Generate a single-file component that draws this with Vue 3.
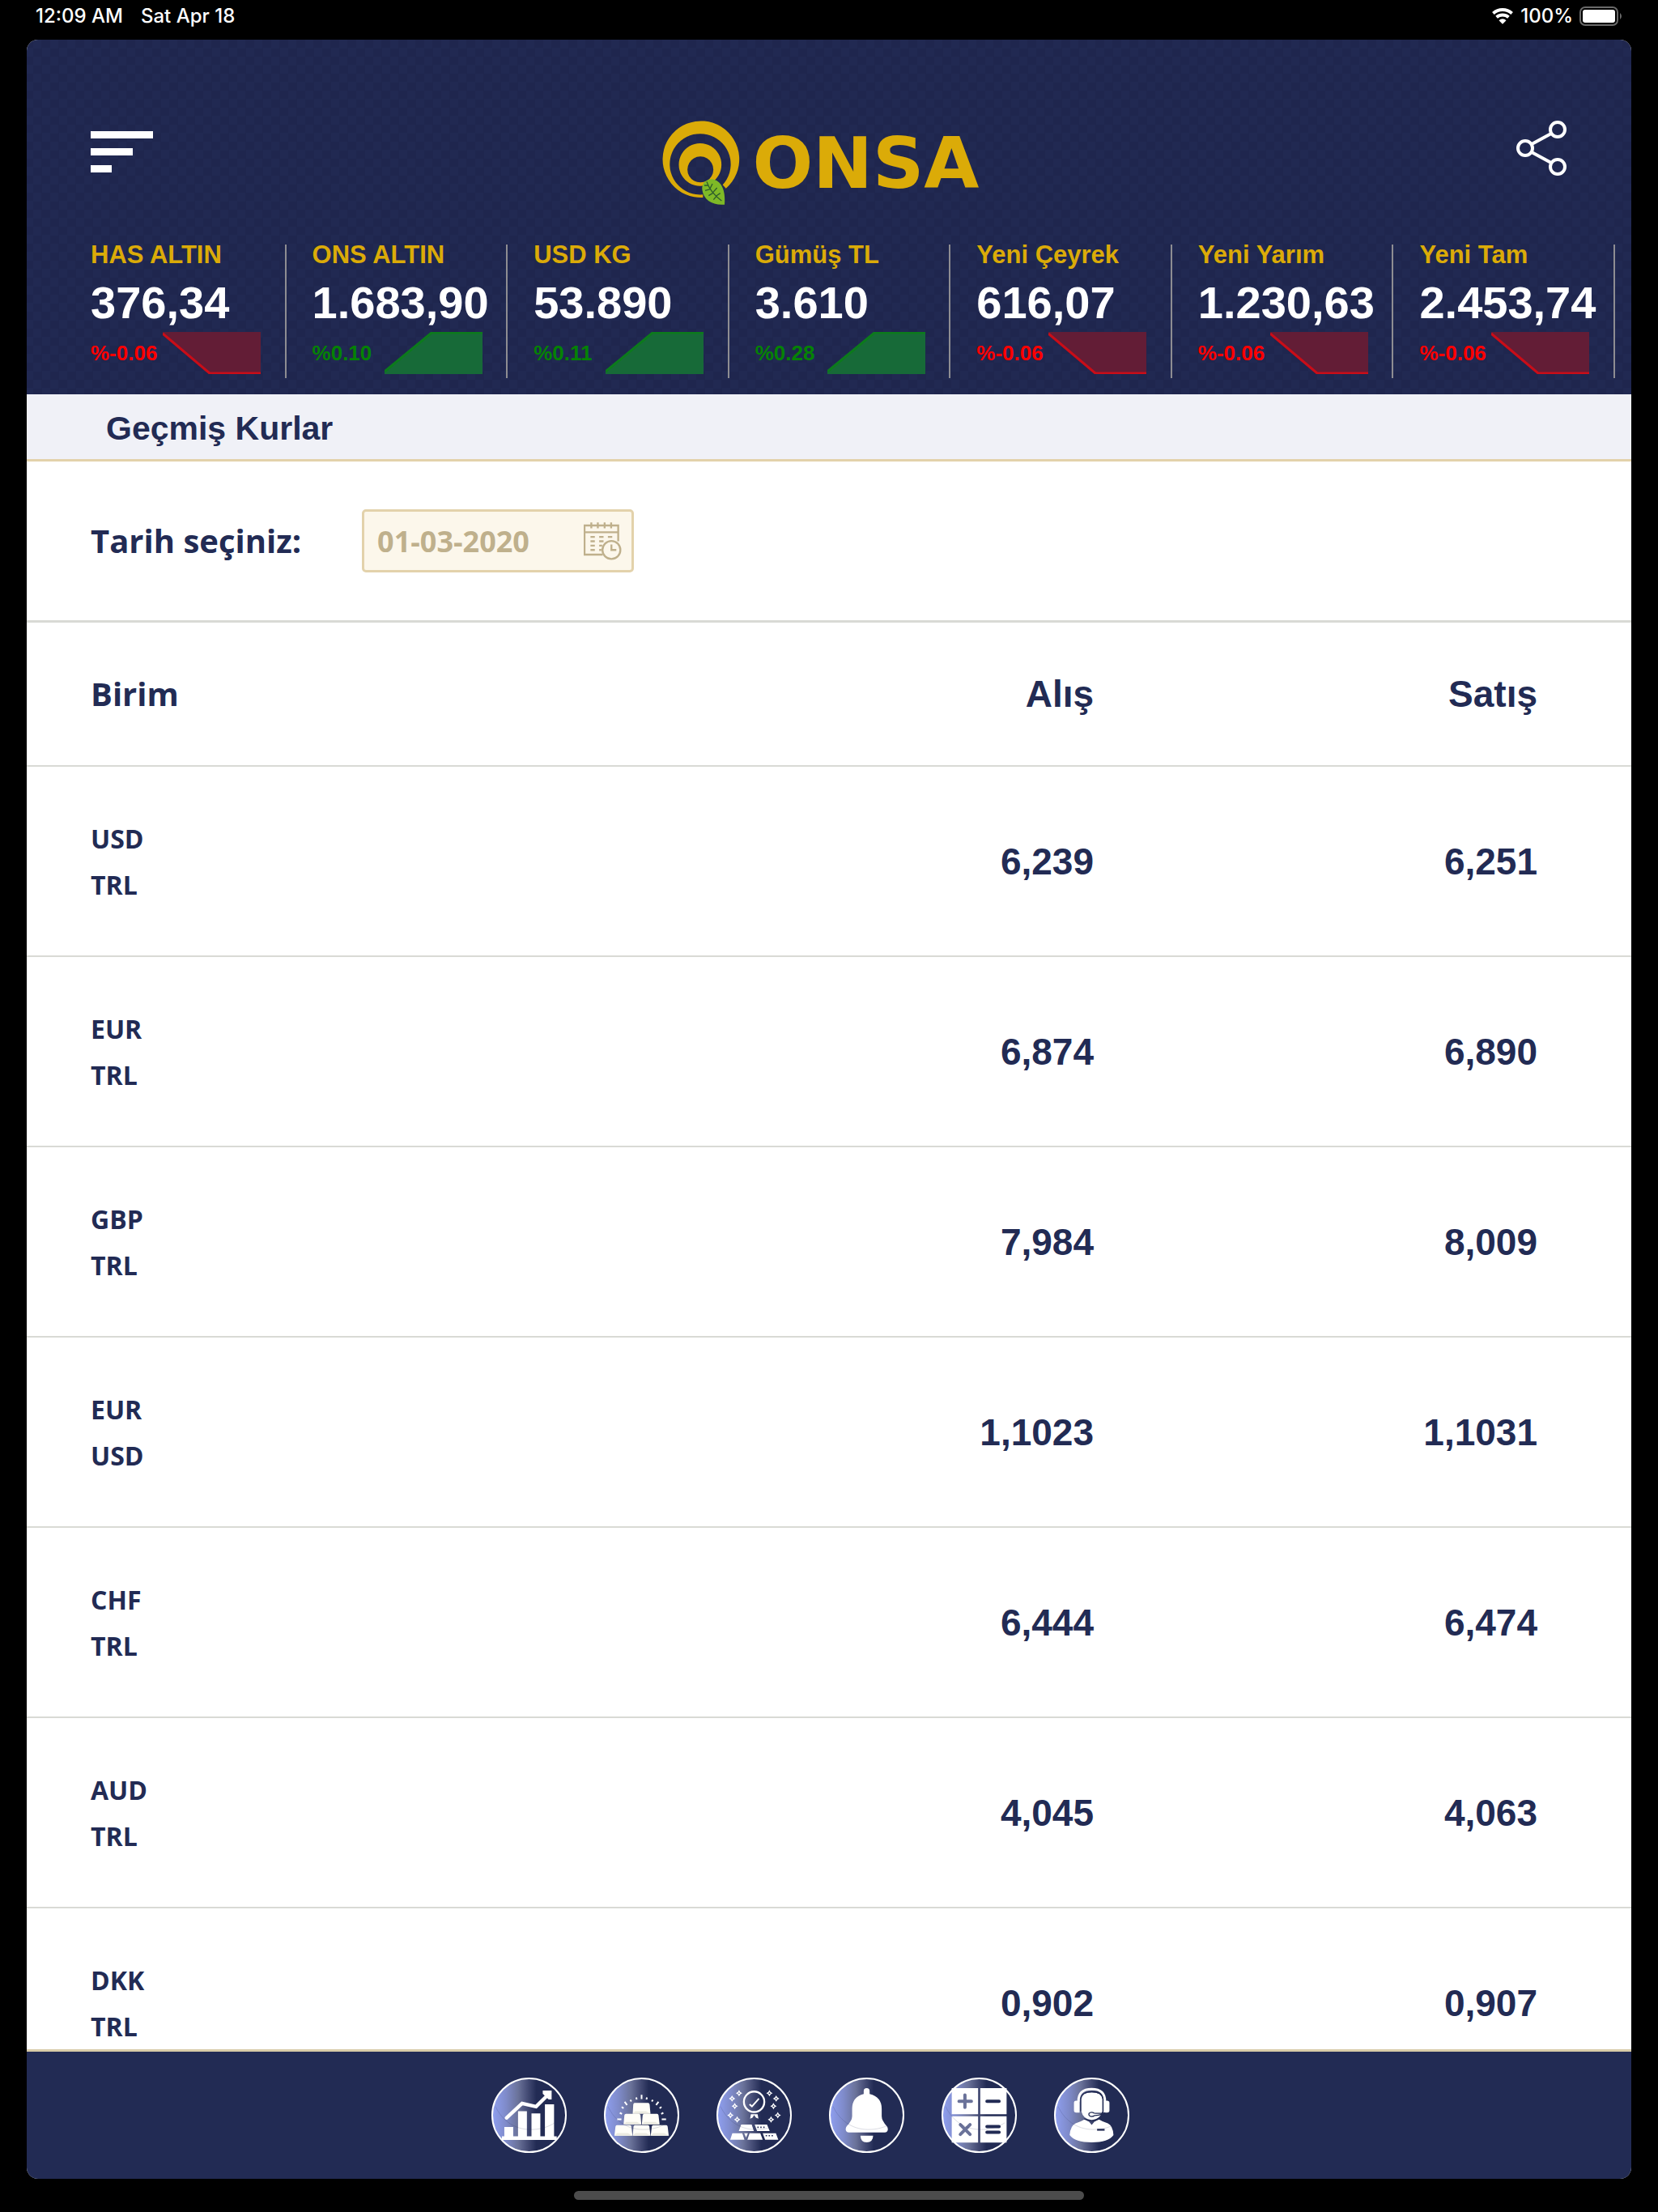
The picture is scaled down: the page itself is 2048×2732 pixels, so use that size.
<template>
    <div class="screen">
        <div class="status-bar">
            <div class="status-group">
                <span>12:09 AM</span>
                <span>Sat Apr 18</span>
            </div>
            <div class="status-group right">
                <svg class="wifi" viewBox="0 0 84 62" aria-hidden="true">
                    <path d="M6 20 A54 54 0 0 1 78 20" />
                    <path d="M19 35 A35 35 0 0 1 65 35" />
                    <path class="dot" d="M42 61 L28 47 A20 20 0 0 1 56 47 Z" />
                </svg>
                <span>100%</span>
                <svg class="battery" viewBox="0 0 53 24" aria-hidden="true">
                    <rect x="1" y="1" width="46" height="22" rx="6" class="case" />
                    <rect x="4" y="4" width="40" height="16" rx="3" fill="#fff" />
                    <path d="M50 8 A5 5 0 0 1 50 16 Z" fill="#6a6a6a" />
                </svg>
            </div>
        </div>

        <div class="app">
            <header class="header">
                <div class="header-top">
                    <button class="menu-button" aria-label="Menü" @click="toggleMenu">
                        <span class="bar long"></span>
                        <span class="bar medium"></span>
                        <span class="bar short"></span>
                    </button>
                    <a href="#" class="logo">
                        <svg class="logo-mark" viewBox="111 93 291 315" aria-hidden="true">
                            <path fill="#dbab08" d="M265 378 A142 142 0 1 1 350 344 L338 331 A113 113 0 1 0 265 367 Z" />
                            <path
                                fill="#dbab08"
                                fill-rule="evenodd"
                                d="M255 177 A79 79 0 1 1 254 177 Z M255 226 A48 48 0 1 0 256 226 Z"
                            />
                            <path
                                fill="#7eb927"
                                d="M262 348 C260 325 275 311 300 310 C333 316 349 350 345 404 C302 408 266 388 262 348 Z"
                            />
                            <path
                                class="veins"
                                d="M279 319 C287 345 310 372 334 390 M284 333 L270 333 M291 347 L273 352 M302 361 L286 371 M314 374 L304 386 M291 345 L300 327 M302 359 L317 342 M314 372 L329 362"
                            />
                        </svg>
                        <span class="logo-text">ONSA</span>
                    </a>
                    <button class="share-button" aria-label="Paylaş">
                        <svg viewBox="0 0 62 68">
                            <circle cx="11" cy="34" r="9" />
                            <circle cx="51" cy="11" r="9" />
                            <circle cx="51" cy="57" r="9" />
                            <path d="M19 29 L43 16 M19 39 L43 52" />
                        </svg>
                    </button>
                </div>

                <ul class="ticker">
                    <li v-for="item in ticker" :key="item.name" :class="item.up ? 'up' : 'down'">
                        <span class="ticker-name">{{ item.name }}</span>
                        <span class="ticker-value">{{ item.value }}</span>
                        <div class="ticker-change">
                            <span>{{ item.change }}</span>
                            <svg viewBox="0 0 121 52" aria-hidden="true">
                                <template v-if="item.up">
                                    <path class="area" d="M0 52 V47 L58 0 H121 V52 Z" />
                                    <path class="edge" d="M0 49 L58 1 H121" />
                                </template>
                                <template v-else>
                                    <path class="area" d="M0 0 H121 V52 H57 L0 4 Z" />
                                    <path class="edge" d="M0 2 L58 51 H121" />
                                </template>
                            </svg>
                        </div>
                    </li>
                </ul>
            </header>

            <h1 class="page-title">Geçmiş Kurlar</h1>

            <main class="content">
                <div class="filter">
                    <label for="date">Tarih seçiniz:</label>
                    <div class="date-box">
                        <input id="date" v-model="date" type="text" />
                        <svg viewBox="0 0 140 140" aria-hidden="true">
                            <path
                                d="M70 119 H3 V12 H127 V70 M3 37 H127 M28 1 V22 M52 1 V22 M77 1 V22 M101 1 V22"
                            />
                            <path
                                stroke-width="7"
                                d="M25 54 H41 M57 54 H73 M89 54 H105 M25 70 H41 M57 70 H73 M25 86 H41 M57 86 H68 M25 102 H41 M57 102 H65"
                            />
                            <circle cx="102" cy="102" r="33" fill="#fcf7eb" />
                            <path d="M102 82 V102 H120" />
                        </svg>
                    </div>
                </div>

                <table class="rates">
                    <thead>
                        <tr>
                            <th class="unit">Birim</th>
                            <th class="buy">Alış</th>
                            <th class="sell">Satış</th>
                        </tr>
                    </thead>
                    <tbody>
                        <tr v-for="rate in rates" :key="rate.from + rate.to">
                            <td class="unit">
                                {{ rate.from }}<br />
                                {{ rate.to }}
                            </td>
                            <td class="buy">{{ rate.buy }}</td>
                            <td class="sell">{{ rate.sell }}</td>
                        </tr>
                    </tbody>
                </table>
            </main>

            <nav class="bottom-nav">
                <button v-for="tab in tabs" :key="tab.icon" :aria-label="tab.label">
                    <svg :viewBox="`${tab.x} 84 268 268`">
                        <g v-if="tab.icon === 'chart'" fill="#fff">
                            <path d="M95 262 H128 V296 H146 V203 H179 V296 H196 V211 H229 V296 H246 V177 H280 V296 H290 V310 H86 V296 H95 Z" />
                            <path d="M103 228 L161 174 L213 186 L252 147" fill="none" stroke="#fff" stroke-width="13" stroke-linecap="round" />
                            <path d="M238 126 H271 V159 H260 L238 138 Z" />
                        </g>

                        <g v-else-if="tab.icon === 'gold'">
                            <path
                                fill="#fffef8"
                                d="M579 172 H629 Q634 172 635 178 L638 212 H572 L574 178 Q575 172 579 172 Z
                                M547 213 H595 Q600 213 601 218 L604 252 H538 L541 218 Q542 213 547 213 Z
                                M615 213 H663 Q667 213 668 218 L672 252 H606 L609 218 Q610 213 615 213 Z
                                M513 255 H562 Q566 255 567 260 L571 294 H504 L508 260 Q509 255 513 255 Z
                                M581 255 H629 Q633 255 634 260 L638 294 H572 L575 260 Q576 255 581 255 Z
                                M648 255 H697 Q701 255 702 260 L706 294 H639 L643 260 Q644 255 648 255 Z"
                            />
                            <path
                                fill="#ecebe1"
                                d="M572 212 L581 203 H621 L638 212 Z M538 252 L548 243 H588 L604 252 Z M606 252 L616 243 H656 L672 252 Z
                                M504 294 L514 284 H554 L571 294 Z M572 294 L582 284 H622 L638 294 Z M639 294 L649 284 H689 L706 294 Z"
                            />
                            <path
                                stroke="#fff"
                                stroke-width="6"
                                d="M605 142 V158 M585 152 L587 159 M563 161 L567 167 M542 168 L551 180 M531 187 L538 192 M524 209 L532 213 M514 233 H530
                                M625 152 L623 159 M647 161 L643 167 M668 168 L659 180 M679 187 L672 192 M686 209 L678 213 M696 233 H680"
                            />
                        </g>

                        <g v-else-if="tab.icon === 'quality'">
                            <circle cx="1023" cy="168" r="38" fill="none" stroke="#fff" stroke-width="7" />
                            <path d="M1006 177 L1015 185 L1041 156" fill="none" stroke="#fff" stroke-width="6" />
                            <path fill="#fff" d="M1011 214 H1036 L1039 231 L1030 227 L1023 217 L1017 227 L1008 231 Z" />
                            <path
                                fill="#fff"
                                d="M975 253 H1014 L1022 277 H966 Z M1025 253 H1071 L1081 277 H1034 Z
                                M942 285 H979 L987 309 H934 Z M986 285 H1000 L993 301 Z M1006 285 H1046 L1055 309 H998 Z M1055 285 H1104 L1113 309 H1064 Z"
                            />
                            <path stroke="#222b54" stroke-width="5" stroke-dasharray="5 6" d="M1035 263 H1066 M1066 294 H1098" />
                            <path
                                v-for="s in sparkles"
                                :key="s.join()"
                                :transform="`translate(${s[0]} ${s[1]})`"
                                d="M0 -8 L3 -3 L8 0 L3 3 L0 8 L-3 3 L-8 0 L-3 -3 Z"
                                fill="none"
                                stroke="#fff"
                                stroke-width="4"
                            />
                        </g>

                        <g v-else-if="tab.icon === 'bell'" fill="#fff">
                            <path
                                d="M200 139 V128 Q200 117 211 117 Q222 117 222 128 V139 Q267 150 267 194 V222 Q267 238 286 259 Q290 264 290 271 Q289 282 278 282 H145 Q134 282 133 271 Q133 264 137 259 Q157 238 157 222 V194 Q157 150 200 139 Z"
                            />
                            <path d="M188 294 H235 Q235 318 211 319 Q188 318 188 294 Z" />
                        </g>

                        <g v-else-if="tab.icon === 'calculator'">
                            <path fill="#fff" d="M528 117 H626 V214 H528 Z M634 117 H732 V214 H634 Z M528 222 H626 V320 H528 Z M634 222 H732 V320 H634 Z" />
                            <path class="sign light" d="M577 143 V189 M555 166 H601 M560 253 L596 289 M596 253 L560 289" />
                            <path class="sign" d="M659 166 H704 M659 260 H704 M659 281 H704" />
                        </g>

                        <g v-else fill="#fff">
                            <path
                                fill="none"
                                stroke="#fff"
                                stroke-width="9"
                                d="M999 167 Q997 121 1048 121 Q1099 121 1097 167"
                            />
                            <path d="M990 164 H1003 V208 H990 Q982 208 982 200 V172 Q982 164 990 164 Z M1092 164 H1105 Q1114 164 1114 172 V200 Q1114 208 1105 208 H1092 Z" />
                            <path d="M1009 158 Q1012 133 1048 133 Q1085 133 1088 158 V202 Q1080 233 1048 236 Q1016 233 1009 202 Z" />
                            <path
                                d="M1022 233 L1038 242 L1048 254 L1058 242 L1074 233 Q1090 243 1108 248 Q1127 256 1129 292 Q1110 319 1048 319 Q986 319 966 292 Q969 256 988 248 Q1006 243 1022 233 Z"
                            />
                            <path
                                fill="none"
                                stroke="#222b54"
                                stroke-width="4"
                                d="M1007 204 V158 Q1010 131 1048 131 Q1087 131 1090 158 V204 M1020 231 Q1048 246 1076 231"
                            />
                            <path
                                fill="none"
                                stroke="#222b54"
                                stroke-width="4"
                                d="M1098 208 Q1090 216 1059 219 M1059 211 H1090 M1058 211 Q1046 203 1038 211 Q1035 220 1046 223 Q1055 223 1059 219"
                            />
                            <path stroke="#222b54" stroke-width="7" d="M1068 272 H1096" />
                        </g>

                        <path
                            class="shine"
                            :transform="`translate(${tab.x - 53} 0)`"
                            d="M62 185 C85 235 130 270 190 271 C225 272 260 262 282 246"
                        />
                    </svg>
                </button>
            </nav>
        </div>

        <div class="home-area">
            <div class="home-indicator"></div>
        </div>
    </div>
</template>

<script setup>
import { ref } from 'vue'

const date = ref('01-03-2020')
const menuOpen = ref(false)

const ticker = [
    { name: 'HAS ALTIN', value: '376,34', change: '%-0.06', up: false },
    { name: 'ONS ALTIN', value: '1.683,90', change: '%0.10', up: true },
    { name: 'USD KG', value: '53.890', change: '%0.11', up: true },
    { name: 'Gümüş TL', value: '3.610', change: '%0.28', up: true },
    { name: 'Yeni Çeyrek', value: '616,07', change: '%-0.06', up: false },
    { name: 'Yeni Yarım', value: '1.230,63', change: '%-0.06', up: false },
    { name: 'Yeni Tam', value: '2.453,74', change: '%-0.06', up: false }
]

const rates = [
    { from: 'USD', to: 'TRL', buy: '6,239', sell: '6,251' },
    { from: 'EUR', to: 'TRL', buy: '6,874', sell: '6,890' },
    { from: 'GBP', to: 'TRL', buy: '7,984', sell: '8,009' },
    { from: 'EUR', to: 'USD', buy: '1,1023', sell: '1,1031' },
    { from: 'CHF', to: 'TRL', buy: '6,444', sell: '6,474' },
    { from: 'AUD', to: 'TRL', buy: '4,045', sell: '4,063' },
    { from: 'DKK', to: 'TRL', buy: '0,902', sell: '0,907' }
]

// x is the left edge of each icon's viewBox
const tabs = [
    { icon: 'chart', label: 'Piyasalar', x: 53 },
    { icon: 'gold', label: 'Altın', x: 471 },
    { icon: 'quality', label: 'Sarrafiye', x: 889 },
    { icon: 'bell', label: 'Alarm', x: 77 },
    { icon: 'calculator', label: 'Hesapla', x: 496 },
    { icon: 'support', label: 'İletişim', x: 914 }
]

const sparkles = [
    [967, 136],
    [941, 156],
    [951, 184],
    [935, 218],
    [960, 234],
    [1080, 136],
    [1105, 156],
    [1095, 184],
    [1111, 218],
    [1086, 234]
]

function toggleMenu() {
    menuOpen.value = !menuOpen.value
}
</script>

<style>
body {
    margin: 0;
    background: #000;
}
</style>

<style scoped>
.screen {
    box-sizing: border-box;
    display: flex;
    flex-direction: column;
    height: 100vh;
    padding: 0 33px;
    background: #000;
    color: #222b54;
    font-family: "Liberation Sans", Arial, sans-serif;
    font-weight: bold;
}

button {
    padding: 0;
    border: none;
    background: none;
    cursor: pointer;
}

.status-bar {
    display: flex;
    justify-content: space-between;
    height: 49px;
    padding: 0 11px;
    color: #fff;
    font: 500 24px/40px Inter, sans-serif;
}

.status-group {
    display: flex;
    align-items: center;
    gap: 22px;
    height: 40px;
}

.status-group.right {
    gap: 8px;
}

.wifi {
    width: 28px;
    height: 20px;
    fill: none;
    stroke: #fff;
    stroke-width: 12;
}

.wifi .dot {
    fill: #fff;
    stroke: none;
}

.battery {
    width: 53px;
    height: 24px;
}

.battery .case {
    fill: none;
    stroke: #6a6a6a;
    stroke-width: 2;
}

.app {
    display: flex;
    flex: 1;
    flex-direction: column;
    min-height: 0;
    border-radius: 14px;
    background: #fff;
    overflow: hidden;
}

.header {
    background: repeating-conic-gradient(#1f264e 0 25%, #212952 0 50%) 8px 0 / 21px 21px;
}

.header-top {
    display: grid;
    grid-template-columns: 1fr auto 1fr;
    align-items: start;
    height: 153px;
    padding: 100px 80px 0 79px;
}

.menu-button {
    display: flex;
    flex-direction: column;
    justify-content: center;
    gap: 12px;
    width: 77px;
    height: 77px;
}

.bar {
    height: 9px;
    background: #fff;
}

.bar.long {
    width: 77px;
}

.bar.medium {
    width: 52px;
}

.bar.short {
    width: 26px;
}

.logo {
    display: flex;
    align-items: center;
    gap: 16px;
    min-width: 414px;
    color: #dbab08;
    text-decoration: none;
}

.logo-mark {
    width: 97px;
    height: 105px;
}

.logo-mark .veins {
    fill: none;
    stroke: #2c5b2c;
    stroke-width: 4;
}

.logo-text {
    font: bold 88px/84px "DejaVu Sans", sans-serif;
}

.share-button {
    justify-self: end;
    width: 62px;
    height: 68px;
}

.share-button svg {
    display: block;
    fill: none;
    stroke: #fff;
    stroke-width: 4;
}

.ticker {
    display: grid;
    grid-template-columns: repeat(7, 1fr);
    margin: 0;
    padding: 0 20px 20px 47px;
    list-style: none;
}

.ticker li {
    display: flex;
    flex-direction: column;
    height: 165px;
    padding-left: 32px;
    border-right: 2px solid #8e8d92;
}

.ticker-name {
    color: #dbab08;
    font-size: 31px;
    line-height: 26px;
    white-space: nowrap;
}

.ticker-value {
    margin: 14px 0 4px;
    color: #fff;
    font-size: 56px;
    line-height: 64px;
}

.ticker-change {
    display: flex;
    align-items: center;
    justify-content: space-between;
    width: 210px;
    font-size: 26px;
}

.ticker-change svg {
    width: 121px;
    height: 52px;
}

.ticker .edge {
    fill: none;
    stroke-width: 3;
}

.up .ticker-change {
    color: #058205;
}

.up .area {
    fill: #176a38;
}

.up .edge {
    stroke: #0c7a1c;
}

.down .ticker-change {
    color: #f00;
}

.down .area {
    fill: #631d36;
}

.down .edge {
    stroke: #c90d18;
}

.page-title {
    margin: 0;
    padding: 4px 98px 0;
    border-bottom: 3px solid #e3d2ab;
    background: #f0f1f7;
    font-size: 41px;
    line-height: 76px;
}

.content {
    flex: 1;
    min-height: 0;
    overflow: hidden;
}

.filter {
    display: flex;
    align-items: center;
    gap: 75px;
    padding: 59px 79px;
    border-bottom: 3px solid #d9dad5;
}

.filter label {
    min-width: 260px;
    font: bold 40px/60px "Open Sans", "Noto Sans", sans-serif;
}

.date-box {
    box-sizing: border-box;
    display: flex;
    align-items: center;
    width: 336px;
    height: 78px;
    padding: 0 12px 0 16px;
    border: 3px solid #e3d2ab;
    border-radius: 5px;
    background: #fcf7eb;
}

.date-box input {
    flex: 1;
    min-width: 0;
    padding: 0;
    border: none;
    background: none;
    color: #bfb08c;
    font: bold 36px "Open Sans", "Noto Sans", sans-serif;
}

.date-box svg {
    width: 47px;
    height: 47px;
    fill: none;
    stroke: #bfb08c;
    stroke-width: 7;
}

.rates {
    width: 100%;
    border-spacing: 0;
    table-layout: fixed;
}

.rates th,
.rates td {
    box-sizing: border-box;
    padding: 0;
    border-bottom: 2px solid #d9dad5;
    font-size: 46px;
    text-align: right;
}

.rates th {
    height: 178px;
}

.rates td {
    height: 235px;
}

.rates .unit {
    padding-left: 79px;
    text-align: left;
}

.rates th.unit {
    font: bold 40px/60px "Open Sans", "Noto Sans", sans-serif;
}

.rates td.unit {
    font: bold 32px/57px "Open Sans", "Noto Sans", sans-serif;
}

.rates .buy {
    width: 28%;
}

.rates .sell {
    width: 33.5%;
    padding-right: 116px;
}

.bottom-nav {
    display: flex;
    align-items: center;
    justify-content: center;
    gap: 46px;
    height: 157px;
    padding-right: 46px;
    border-top: 3px solid #d8cba8;
    background: #222b54;
}

.bottom-nav button {
    box-sizing: border-box;
    width: 93px;
    height: 93px;
    border: 2px solid #fff;
    border-radius: 50%;
    background: linear-gradient(to right, #8e9eee 0%, #7f8bca 18%, #6a7299 35%, #4a517a 46%, #222b54 60%);
}

.bottom-nav svg {
    display: block;
    width: 89px;
    height: 89px;
    overflow: visible;
}

.bottom-nav .sign {
    stroke: #222b54;
    stroke-width: 12;
    stroke-linecap: round;
}

.bottom-nav .sign.light {
    stroke: #6a7299;
}

.shine {
    fill: none;
    stroke: #222b54;
    stroke-opacity: 0.25;
    stroke-width: 2;
}

.home-area {
    display: flex;
    justify-content: center;
    height: 26px;
    padding-top: 15px;
}

.home-indicator {
    width: 630px;
    height: 11px;
    border-radius: 6px;
    background: #4c4c4c;
}
</style>
